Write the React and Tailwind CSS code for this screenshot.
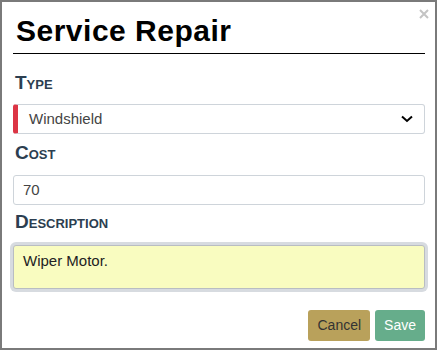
export default function App() {
  const label = 'text-[19px] leading-[22px] font-bold text-[#2c3e50] [font-variant:small-caps] pl-[2px]'
  const input = 'w-full h-[30px] border border-[#ced4da] rounded-[3px] bg-white text-[15px] text-[#444] px-[9px] flex items-center'

  return (
    <div className="w-[437px] h-[350px] border-2 border-[#7a7a7a] bg-white relative pt-[12px] pl-[11px] pr-[10px] font-['Liberation_Sans',Arial,sans-serif]">
      {/* Close */}
      <svg className="absolute top-[7px] right-[6px]" width="10" height="10" viewBox="0 0 10 10">
        <path d="M1 1L9 9M9 1L1 9" stroke="#c4c4c4" strokeWidth="2" />
      </svg>

      {/* Title */}
      <div className="text-[30px] leading-[34px] font-bold text-black tracking-[0.5px] pl-[3px] pb-[5px] border-b border-black">
        Service Repair
      </div>

      {/* Type */}
      <div className={`${label} mt-[18px]`}>Type</div>
      <div className={`${input} mt-[10px] border-l-[5px] border-l-[#dc3545] pl-[11px] justify-between`}>
        <span>Windshield</span>
        <svg width="12" height="8" viewBox="0 0 12 8" className="mr-[2px]">
          <polyline points="1,1.5 6,6 11,1.5" fill="none" stroke="#000" strokeWidth="2" />
        </svg>
      </div>

      {/* Cost */}
      <div className={`${label} mt-[8px]`}>Cost</div>
      <div className={`${input} mt-[11px]`}>70</div>

      {/* Description */}
      <div className={`${label} mt-[6px]`}>Description</div>
      <div className="mt-[12px] h-[44px] w-full border border-[#b9bdc2] rounded-[3px] bg-[#f9fcc0] shadow-[0_0_0_3px_#d7dbe0] px-[9px] pt-[6px] text-[15px] leading-[18px] text-[#222]">
        Wiper Motor.
      </div>

      {/* Actions */}
      <div className="mt-[21px] flex justify-end gap-[5px]">
        <button className="h-[31px] px-[9px] rounded-[3px] bg-[#b9a15b] text-[#333] text-[14px]">Cancel</button>
        <button className="h-[31px] px-[9px] rounded-[3px] bg-[#66ad8b] text-white text-[14px]">Save</button>
      </div>
    </div>
  )
}
